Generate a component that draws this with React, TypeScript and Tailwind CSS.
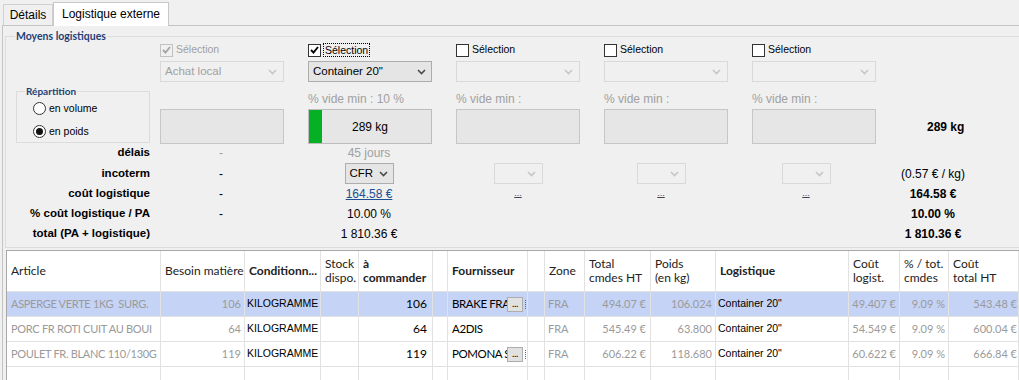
import React from "react";

const sans = "font-['Liberation_Sans',Arial,sans-serif]";
const cal = "font-['Lato',sans-serif]";

function Chevron({ disabled }: { disabled?: boolean }) {
  return (
    <svg width="9" height="6" viewBox="0 0 9 6">
      <path d="M1 1 L4.5 4.5 L8 1" fill="none" stroke={disabled ? "#c6c6c6" : "#4a4a4a"} strokeWidth="1.6" />
    </svg>
  );
}

function Check({ state }: { state: "on" | "off" | "disabled" }) {
  if (state === "off")
    return <span className="w-[13px] h-[13px] border border-[#333] bg-white shrink-0" />;
  const color = state === "on" ? "#000" : "#a6a6a6";
  return (
    <span
      className={`w-[13px] h-[13px] border shrink-0 flex items-center justify-center ${
        state === "on" ? "border-[#333] bg-white" : "border-[#c2c2c2] bg-[#f0f0f0]"
      }`}
    >
      <svg width="9" height="8" viewBox="0 0 9 8">
        <path d="M1 4 L3.5 6.5 L8 1" fill="none" stroke={color} strokeWidth="1.9" />
      </svg>
    </span>
  );
}

function Radio({ on }: { on?: boolean }) {
  return (
    <span className="w-[13px] h-[13px] rounded-full border border-[#333] bg-white flex items-center justify-center shrink-0">
      {on && <span className="w-[7px] h-[7px] rounded-full bg-[#111]" />}
    </span>
  );
}

function Combo({ value, disabled, className = "w-[124px]" }: { value?: string; disabled?: boolean; className?: string }) {
  return (
    <div
      className={`${className} h-[21px] flex items-center justify-between pl-[4px] border text-[11.5px] ${
        disabled ? "pr-[6px] border-[#d9d9d9] bg-[#f0f0f0] text-[#a0a0a0]" : "pr-[5px] border-[#adadad] bg-[#e5e5e5] text-black"
      }`}
    >
      <span>{value}</span>
      <Chevron disabled={disabled} />
    </div>
  );
}

const M = ["ml-[11px]", "ml-[48px]", "ml-[49px]", "ml-[43px]", "ml-[45px]", "ml-[27px]"];

function ValueRow({ label, cells, h }: { label: string; cells: React.ReactNode[]; h: string }) {
  return (
    <div className={`flex items-center ${h}`}>
      <div className="w-[154px] pr-[10px] text-right font-bold text-[11.5px] text-black">{label}</div>
      {cells.map((c, i) => (
        <div key={i} className={`w-[100px] flex justify-center text-[12px] ${M[i]}`}>
          {c}
        </div>
      ))}
    </div>
  );
}

const Dots = () => <span className="text-[9px] underline text-[#444] leading-none -mt-[2px]">...</span>;

const cols =
  "grid grid-cols-[154px_84px_76px_38px_74px_15px_80px_17px_40px_66px_65px_133px_51px_49px_70px_1fr]";

type Row = {
  article: string;
  besoin: string;
  cmd: string;
  four: string;
  btn: boolean;
  total: string;
  poids: string;
  cl: string;
  pct: string;
  ct: string;
};

const rows: Row[] = [
  { article: "ASPERGE VERTE 1KG  SURG.", besoin: "106", cmd: "106", four: "BRAKE FRA", btn: true, total: "494.07 €", poids: "106.024", cl: "49.407 €", pct: "9.09 %", ct: "543.48 €" },
  { article: "PORC FR ROTI CUIT AU BOUI", besoin: "64", cmd: "64", four: "A2DIS", btn: false, total: "545.49 €", poids: "63.800", cl: "54.549 €", pct: "9.09 %", ct: "600.04 €" },
  { article: "POULET FR. BLANC 110/130G", besoin: "119", cmd: "119", four: "POMONA S", btn: true, total: "606.22 €", poids: "118.680", cl: "60.622 €", pct: "9.09 %", ct: "666.84 €" },
];

const cell = "border-r border-[#e2e2e2] overflow-hidden whitespace-pre flex items-center";
const grey = "text-[#9a9a9a] text-[11px]";

function Header() {
  const h = (t: React.ReactNode, bold = false) => (
    <div className={`${cell} pl-[4px] leading-[14px] text-[12px] text-[#222] ${bold ? "font-bold" : ""}`}>
      <div>{t}</div>
    </div>
  );
  return (
    <div className={`${cols} h-[41px] bg-white border-b border-[#e2e2e2]`}>
      {h("Article")}
      {h("Besoin matière")}
      {h("Conditionn...", true)}
      {h(<>Stock<br />dispo.</>)}
      {h(<>à<br />commander</>, true)}
      {h("")}
      {h("Fournisseur", true)}
      {h("")}
      {h("Zone")}
      {h(<>Total<br />cmdes HT</>)}
      {h(<>Poids<br />(en kg)</>)}
      {h("Logistique", true)}
      {h(<>Coût<br />logist.</>)}
      {h(<>% / tot.<br />cmdes</>)}
      {h(<>Coût<br />total HT</>)}
      <div />
    </div>
  );
}

export default function App() {
  return (
    <div className={`w-[1019px] h-[380px] overflow-hidden bg-[#f0f0f0] ${sans} text-black`}>
      {/* tabs */}
      <div className="h-[25px] flex items-end pl-[3px]">
        <div className="h-[21px] w-[50px] justify-center border border-b-0 border-[#d0d0d0] bg-[#f0f0f0] text-[12px] flex items-center">
          Détails
        </div>
        <div className="h-[24px] w-[116px] justify-center border border-b-0 border-[#c8c8c8] bg-white text-[12px] flex items-start pt-[2px] -mb-[1px] relative z-10">
          Logistique externe
        </div>
      </div>
      <div className="border-t border-l border-[#c4c4c4] ml-[2px] h-[355px]">
        {/* group box */}
        <div className="relative mt-[10px] ml-[2px] h-[212px] border border-r-0 border-[#dcdcdc]">
          <span className="absolute left-[9px] -top-[6px] px-[1px] bg-[#f0f0f0] text-[10.5px] font-bold text-[#1f3f75] leading-[11px] font-['Lato',sans-serif]">
            Moyens logistiques
          </span>

          {/* row A: selection */}
          <div className="flex h-[14px] mt-[6px] items-center">
            <div className="w-[154px]" />
            <div className="flex gap-[24px] text-[10.5px]">
              <div className="w-[124px] flex items-center gap-[3px] text-[#a0a0a0]">
                <Check state="disabled" />
                <span>Sélection</span>
              </div>
              <div className="w-[124px] flex items-center gap-[2px]">
                <Check state="on" />
                <span className="border border-dotted border-black px-[1px] leading-[12px]">Sélection</span>
              </div>
              {[0, 1, 2].map((i) => (
                <div key={i} className="w-[124px] flex items-center gap-[3px]">
                  <Check state="off" />
                  <span>Sélection</span>
                </div>
              ))}
            </div>
          </div>

          {/* row B: combos */}
          <div className="flex mt-[4px]">
            <div className="w-[154px]" />
            <div className="flex gap-[24px]">
              <Combo value="Achat local" disabled />
              <Combo value={'Container 20"'} />
              <Combo disabled />
              <Combo disabled />
              <Combo disabled />
            </div>
          </div>

          {/* rows C + D */}
          <div className="flex mt-[10px]">
            <div className="w-[154px] pl-[10px]">
              <div className="relative -mt-[1px] w-[134px] h-[52px] border border-[#dcdcdc]">
                <span className="absolute left-[8px] -top-[6px] px-[1px] bg-[#f0f0f0] text-[10px] font-bold text-[#1f3f75] leading-[11px] font-['Lato',sans-serif]">
                  Répartition
                </span>
                <div className="flex flex-col gap-[7px] pl-[16px] pt-[9px] text-[10.5px]">
                  <div className="flex items-center gap-[3px]">
                    <Radio />
                    <span>en volume</span>
                  </div>
                  <div className="flex items-center gap-[3px]">
                    <Radio on />
                    <span>en poids</span>
                  </div>
                </div>
              </div>
            </div>
            <div className="flex flex-col">
              <div className="flex gap-[24px] h-[14px] items-center text-[12px] text-[#a0a0a0]">
                <div className="w-[124px]" />
                <div className="w-[124px]">% vide min : 10 %</div>
                <div className="w-[124px]">% vide min :</div>
                <div className="w-[124px]">% vide min :</div>
                <div className="w-[124px]">% vide min :</div>
              </div>
              <div className="flex items-center mt-[3px]">
                <div className="flex gap-[24px]">
                  <div className="w-[124px] h-[35px] border border-[#c6c6c6] bg-[#e6e6e6]" />
                  <div className="w-[124px] h-[35px] border border-[#bcbcbc] bg-[#e6e6e6] flex items-stretch relative">
                    <div className="w-[13px] bg-[#06b025]" />
                    <div className="flex-1 flex items-center justify-center text-[12px] pr-[13px]">289 kg</div>
                  </div>
                  <div className="w-[124px] h-[35px] border border-[#c6c6c6] bg-[#e6e6e6]" />
                  <div className="w-[124px] h-[35px] border border-[#c6c6c6] bg-[#e6e6e6]" />
                  <div className="w-[124px] h-[35px] border border-[#c6c6c6] bg-[#e6e6e6]" />
                </div>
                <div className="ml-[51px] font-bold text-[12px]">289 kg</div>
              </div>
            </div>
          </div>

          {/* value rows */}
          <ValueRow
            h="h-[18px]"
            label="délais"
            cells={[<span className="text-[#a0a0a0]">-</span>, <span className="text-[#a0a0a0]">45 jours</span>, null, null, null, null]}
          />
          <div className="mt-[1px]">
            <ValueRow
              h="h-[21px]"
              label="incoterm"
              cells={[
                <span>-</span>,
                <Combo value="CFR" className="w-[49px]" />,
                <Combo disabled className="w-[49px]" />,
                <Combo disabled className="w-[49px]" />,
                <Combo disabled className="w-[49px]" />,
                <span>(0.57 € / kg)</span>,
              ]}
            />
          </div>
          <ValueRow
            h="h-[20px]"
            label="coût logistique"
            cells={[
              <span>-</span>,
              <span className="text-[#1c4f8f] underline">164.58 €</span>,
              <Dots />,
              <Dots />,
              <Dots />,
              <span className="font-bold">164.58 €</span>,
            ]}
          />
          <ValueRow
            h="h-[20px]"
            label="% coût logistique / PA"
            cells={[<span>-</span>, <span>10.00 %</span>, null, null, null, <span className="font-bold">10.00 %</span>]}
          />
          <ValueRow
            h="h-[19px]"
            label="total (PA + logistique)"
            cells={[null, <span>1 810.36 €</span>, null, null, null, <span className="font-bold">1 810.36 €</span>]}
          />
        </div>

        {/* grid */}
        <div className={`mt-[2px] ml-[3px] border-t border-l border-[#a8a8a8] bg-white ${cal}`}>
          <Header />
          {rows.map((r, i) => (
            <div
              key={i}
              className={`${cols} h-[25px] border-b border-[#e2e2e2] text-[12px] ${i === 0 ? "bg-[#c5d3f6]" : "bg-white"}`}
            >
              <div className={`${cell} pl-[4px] ${grey} tracking-[-0.3px]`}>{r.article}</div>
              <div className={`${cell} justify-end pr-[3px] ${grey}`}>{r.besoin}</div>
              <div className={`${cell} pl-[2px] text-[10.5px] ${sans}`}>KILOGRAMME</div>
              <div className={cell} />
              <div className={`${cell} justify-end pr-[5px]`}>{r.cmd}</div>
              <div className={cell} />
              <div className={`${cell} pl-[4px] relative text-[11.5px] tracking-[-0.4px]`}>
                <span>{r.four}</span>
                {r.btn && (
                  <span className="absolute left-[59px] top-[5px] w-[16px] h-[15px] border border-[#adadad] bg-[#e1e1e1] text-[10px] leading-[10px] flex justify-center">
                    ...
                  </span>
                )}
                {r.btn && <span className="absolute left-[77px] top-[8px] w-[1px] h-[9px] border-l border-dotted border-[#666]" />}
              </div>
              <div className={cell} />
              <div className={`${cell} pl-[3px] ${grey}`}>FRA</div>
              <div className={`${cell} justify-end pr-[4px] ${grey}`}>{r.total}</div>
              <div className={`${cell} justify-end pr-[3px] ${grey}`}>{r.poids}</div>
              <div className={`${cell} pl-[2px] text-[10.5px] ${sans}`}>Container 20"</div>
              <div className={`${cell} justify-end pr-[3px] ${grey}`}>{r.cl}</div>
              <div className={`${cell} justify-end pr-[3px] ${grey}`}>{r.pct}</div>
              <div className={`${cell} justify-end pr-[1px] ${grey}`}>{r.ct}</div>
              <div />
            </div>
          ))}
          <div className={`${cols} h-[25px]`}>
            {Array.from({ length: 15 }).map((_, i) => (
              <div key={i} className={cell} />
            ))}
            <div />
          </div>
        </div>
      </div>
    </div>
  );
}
